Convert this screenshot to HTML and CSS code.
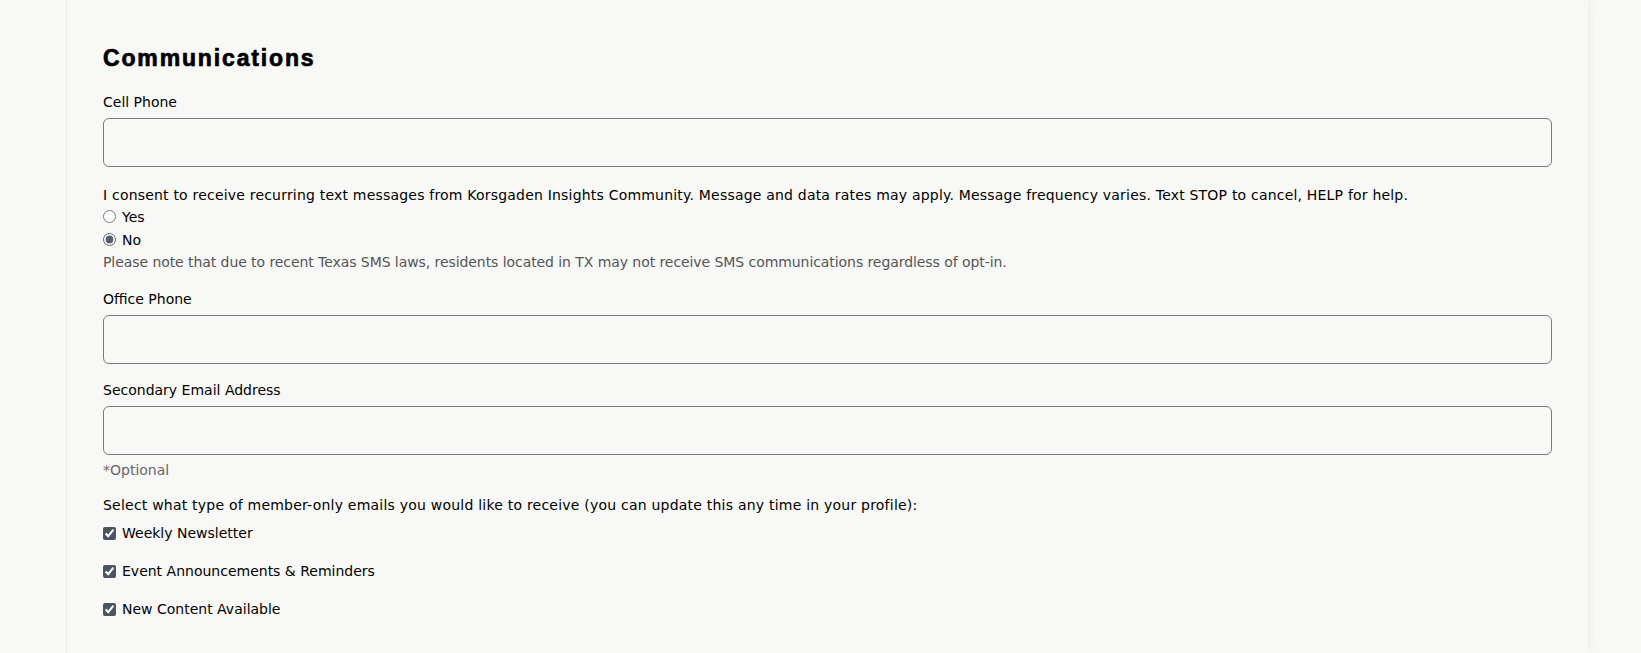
FILE: index.html
```html
<!DOCTYPE html>
<html lang="en">
<head>
<meta charset="utf-8">
<title>Communications</title>
<link rel="stylesheet" href="styles.css">
</head>
<body>
<div class="page">
  <section class="card">
    <h2 class="title">Communications</h2>

    <label class="field-label" for="cell">Cell Phone</label>
    <input class="text-input" id="cell" type="text">

    <p class="consent">I consent to receive recurring text messages from Korsgaden Insights Community. Message and data rates may apply. Message frequency varies. Text STOP to cancel, HELP for help.</p>
    <div class="radio-group">
      <label class="choice"><input type="radio" name="sms" class="radio"> <span>Yes</span></label>
      <label class="choice"><input type="radio" name="sms" class="radio" checked> <span>No</span></label>
    </div>
    <p class="note">Please note that due to recent Texas SMS laws, residents located in TX may not receive SMS communications regardless of opt-in.</p>

    <label class="field-label gap-lg" for="office">Office Phone</label>
    <input class="text-input" id="office" type="text">

    <label class="field-label gap-md" for="email2">Secondary Email Address</label>
    <input class="text-input" id="email2" type="text">
    <p class="hint">*Optional</p>

    <p class="select-label">Select what type of member-only emails you would like to receive (you can update this any time in your profile):</p>
    <div class="check-group">
      <label class="check"><input type="checkbox" class="checkbox" checked> <span>Weekly Newsletter</span></label>
      <label class="check"><input type="checkbox" class="checkbox" checked> <span>Event Announcements &amp; Reminders</span></label>
      <label class="check"><input type="checkbox" class="checkbox" checked> <span>New Content Available</span></label>
    </div>
  </section>
</div>
</body>
</html>
```
FILE: styles.css
```css
html, body {
  margin: 0;
  padding: 0;
  background: #f8f8f6;
}

body {
  font-family: "DejaVu Sans", "Open Sans", sans-serif;
  color: #111;
  font-size: 14px;
  overflow: hidden;
}

.page {
  display: flex;
  height: 653px;
}

.card {
  margin-left: 66px;
  width: 1522px;
  box-sizing: border-box;
  padding: 44px 36px 0 36px;
  border-left: 1px solid #ebebe9;
  background: #f8f8f6;
  box-shadow: 4px 0 8px -2px rgba(0, 0, 0, 0.06);
  display: flex;
  flex-direction: column;
}

.title {
  margin: 0;
  font-family: "Liberation Sans", Arial, sans-serif;
  font-weight: 900;
  font-size: 23px;
  line-height: 29px;
  letter-spacing: 1.85px;
  color: #000;
  -webkit-text-stroke: 0.7px #000;
}

.field-label {
  margin-top: 19px;
  font-size: 14px;
  line-height: 20px;
  color: #000;
}

.gap-lg { margin-top: 17px; }
.gap-md { margin-top: 16px; }

.text-input {
  margin-top: 6px;
  height: 49px;
  box-sizing: border-box;
  width: 100%;
  border: 1px solid #7a7a7a;
  border-radius: 6px;
  background: #f8f8f6;
  font: inherit;
  padding: 0 12px;
}

.consent {
  margin: 18px 0 0 0;
  font-size: 14px;
  line-height: 20px;
  letter-spacing: 0.2px;
  color: #000;
}

.radio-group {
  display: flex;
  flex-direction: column;
}

.choice {
  display: flex;
  align-items: center;
  height: 23px;
  font-size: 14px;
  color: #000;
}

.radio {
  margin: 0 6px 0 0;
  width: 13px;
  height: 13px;
  accent-color: #5a606b;
}

.note {
  margin: 1px 0 0 0;
  font-size: 14px;
  line-height: 20px;
  letter-spacing: -0.07px;
  color: #555;
}

.hint {
  margin: 5px 0 0 0;
  font-size: 14px;
  line-height: 20px;
  color: #666;
}

.select-label {
  margin: 15px 0 0 0;
  font-size: 14px;
  line-height: 20px;
  letter-spacing: 0.22px;
  color: #000;
}

.check-group {
  margin-top: 8px;
  display: flex;
  flex-direction: column;
  gap: 18px;
}

.check {
  display: flex;
  align-items: center;
  height: 20px;
  font-size: 14px;
  color: #000;
}

.checkbox {
  margin: 0 6px 0 0;
  width: 13px;
  height: 13px;
  accent-color: #4d5461;
}
```
